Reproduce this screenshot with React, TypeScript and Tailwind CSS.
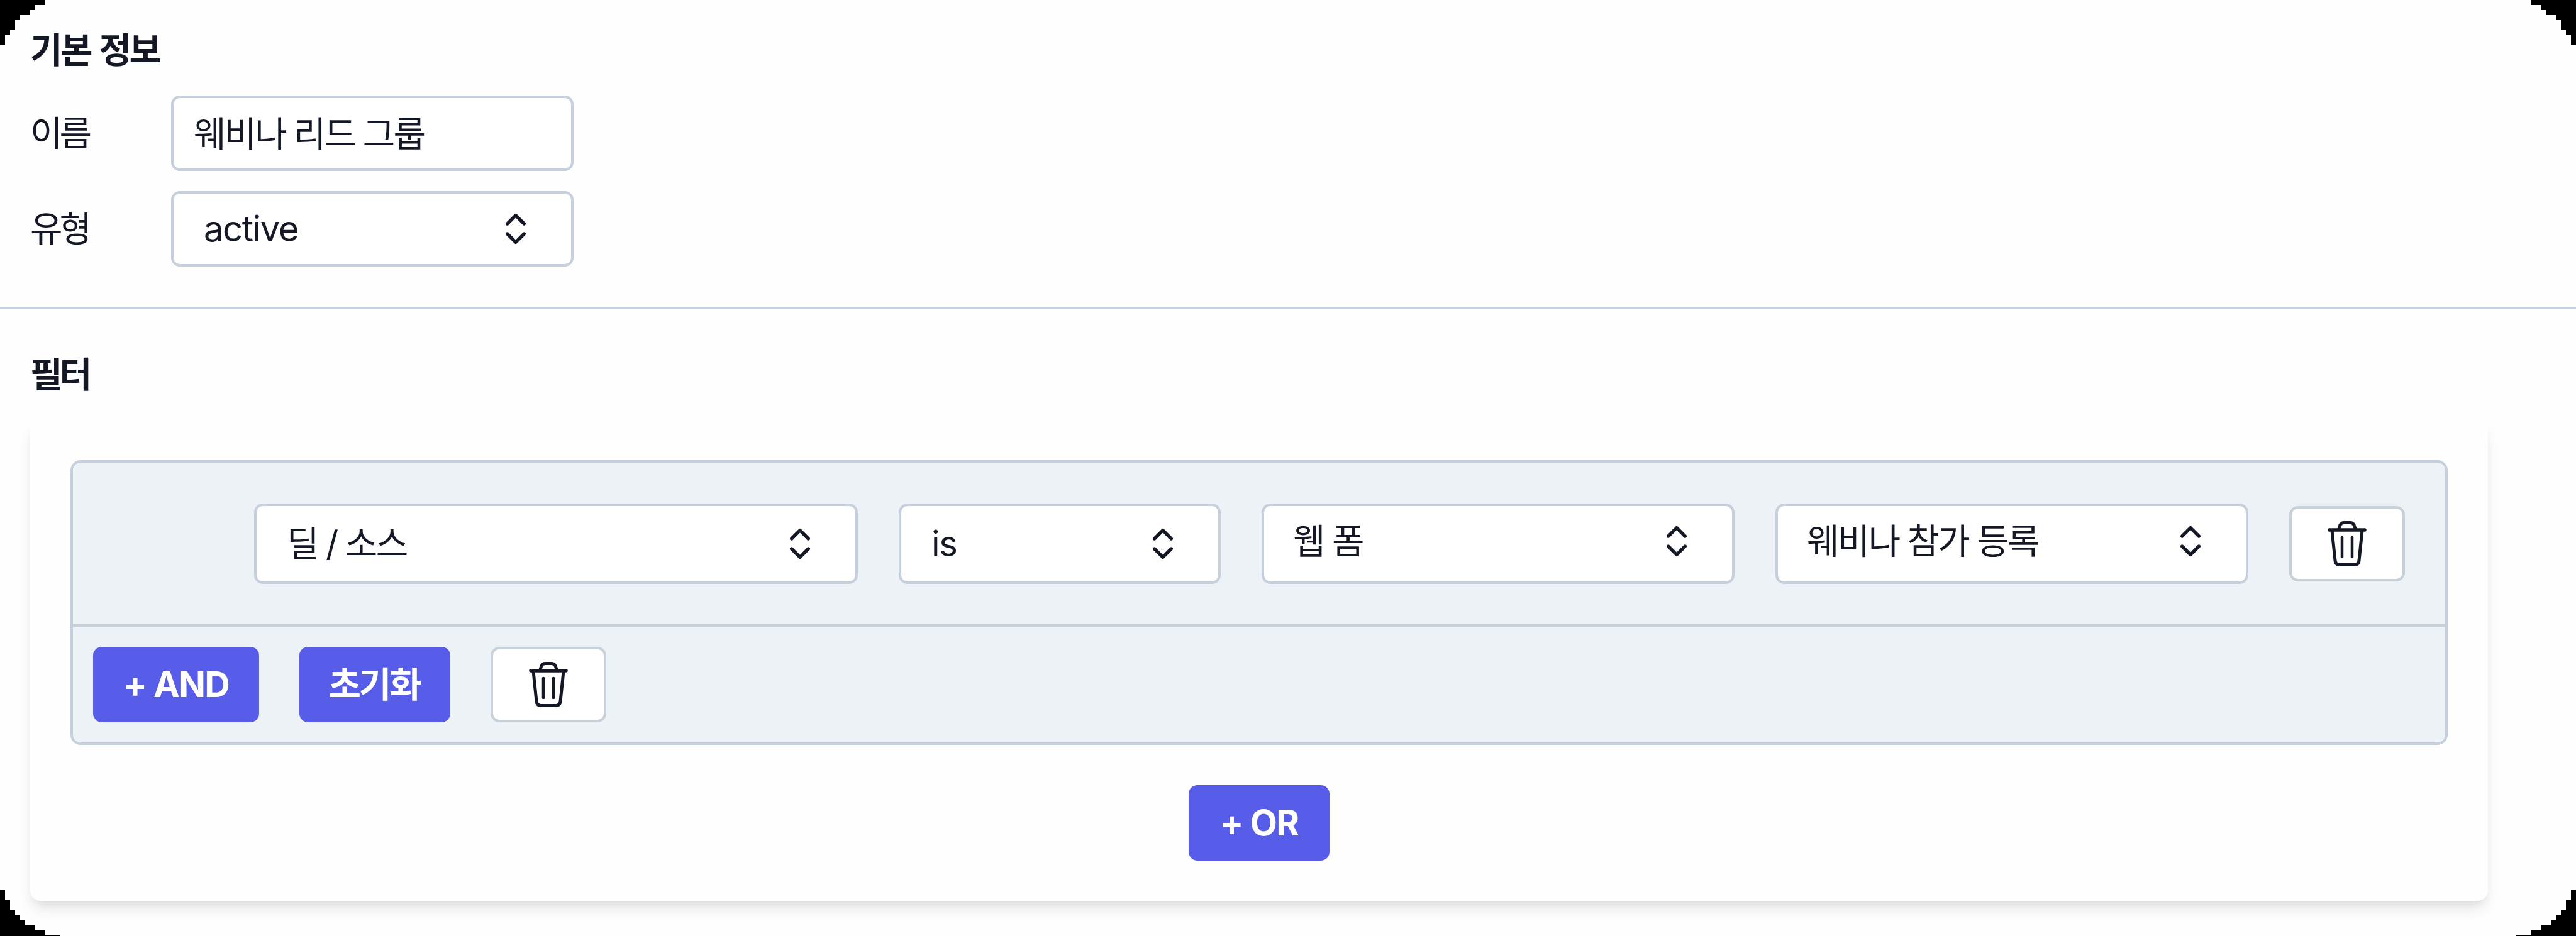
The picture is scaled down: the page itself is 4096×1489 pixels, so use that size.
import type { ReactNode } from "react";
import { ChevronsUpDown } from "lucide-react";

function Corner({ rows, className }: { rows: number[][]; className: string }) {
  return (
    <svg className={className} width="96" height="73" viewBox="0 0 96 73" shapeRendering="crispEdges" fill="#000">
      {rows.map(([y, w, h]) => (
        <rect key={y} x="0" y={y} width={w} height={h} />
      ))}
    </svg>
  );
}

const topRows = [
  [0, 72, 8],
  [8, 56, 8],
  [16, 48, 8],
  [24, 32, 8],
  [32, 24, 16],
  [48, 16, 8],
  [56, 8, 16],
];
const bottomRows = [
  [0, 8, 16],
  [16, 16, 16],
  [32, 24, 8],
  [40, 32, 8],
  [48, 40, 8],
  [56, 56, 8],
  [64, 72, 8],
  [72, 96, 1],
];

function TrashIcon() {
  return (
    <svg className="h-[76px] w-[64px]" viewBox="0 0 64 76" fill="none" stroke="#141824" strokeWidth="5" strokeLinecap="round" strokeLinejoin="round">
      <path d="M4 16H60" strokeWidth="5.5" />
      <path d="M19 14L21 8Q23 4.5 27 4.5H37Q41 4.5 43 8L45 14" />
      <path d="M8 17L13 65Q14 71.5 20 71.5H44Q50 71.5 51 65L56 17" />
      <path d="M24 28V59M40 28V59" strokeWidth="4.5" />
    </svg>
  );
}

function TrashButton() {
  return (
    <button className="flex h-[120px] w-[184px] shrink-0 items-center justify-center rounded-[14px] border-4 border-[#c8d0da] bg-white">
      <TrashIcon />
    </button>
  );
}

function Select({ className, children }: { className: string; children: ReactNode }) {
  return (
    <button className={`flex shrink-0 items-center justify-between rounded-[14px] border-4 border-[#c5d0dc] bg-white pl-12 ${className}`}>
      <span>{children}</span>
      <ChevronsUpDown size={64} strokeWidth={2} />
    </button>
  );
}

function Primary({ className, children }: { className: string; children: ReactNode }) {
  return (
    <button className={`flex h-[120px] items-center justify-center rounded-[14px] bg-[#575de8] font-bold text-white ${className}`}>
      {children}
    </button>
  );
}

export default function App() {
  return (
    <main className="relative h-[1489px] w-[4096px] overflow-hidden bg-[#fefefe] font-['Inter','Noto_Sans_CJK_KR',sans-serif] text-[56px] leading-[80px] text-[#141824]">
      <section className="flex h-[492px] flex-col border-b-4 border-[#c5d0dc] pl-12 pt-10">
        <h2 className="font-bold tracking-[-3.6px] [word-spacing:4px]">기본 정보</h2>
        <div className="mt-8 flex items-center">
          <label className="w-[224px] tracking-[-5px]">이름</label>
          <input
            defaultValue="웨비나 리드 그룹"
            className="h-[120px] w-[640px] rounded-[14px] border-4 border-[#c5d0dc] bg-white px-8 pb-2 tracking-[-2.9px]"
          />
        </div>
        <div className="mt-8 flex items-center">
          <label className="w-[224px] tracking-[-5px]">유형</label>
          <Select className="h-[120px] w-[640px] pr-14">
            <span className="tracking-[-1.4px]">active</span>
          </Select>
        </div>
      </section>
      <section className="pl-12 pt-16">
        <h2 className="font-bold tracking-[-5px]">필터</h2>
        <div className="mt-8 h-[765px] w-[3908px] rounded-[16px] px-16 pt-16 shadow-[0_16px_24px_-4px_rgba(0,0,0,0.1),0_8px_16px_-8px_rgba(0,0,0,0.1)]">
          <div className="h-[453px] w-[3780px] rounded-[16px] border-4 border-[#c5d0dc] bg-[#edf2f7]">
            <div className="flex h-[261px] items-center gap-[65px] border-b-4 border-[#c8d0da] pl-[288px]">
              <Select className="h-[128px] w-[960px] pr-14">
                <span className="tracking-[-2.6px]">딜 / 소스</span>
              </Select>
              <Select className="h-[128px] w-[512px] pr-14">
                <span className="tracking-[-1.4px]">is</span>
              </Select>
              <Select className="h-[128px] w-[752px] pb-2 pr-14">
                <span className="-ml-0.5 tracking-[-2.6px]">웹 폼</span>
              </Select>
              <Select className="h-[128px] w-[752px] pb-2 pr-14">
                <span className="-ml-0.5 tracking-[-2.7px]">웨비나 참가 등록</span>
              </Select>
              <TrashButton />
            </div>
            <div className="flex items-center gap-16 pl-8 pt-8">
              <Primary className="w-[264px] tracking-[-1.6px]">+ AND</Primary>
              <Primary className="w-[240px] pr-0.5 tracking-[-3.2px]">초기화</Primary>
              <TrashButton />
            </div>
          </div>
          <div className="mt-16 flex justify-center">
            <Primary className="w-[224px] tracking-[-1.6px]">+ OR</Primary>
          </div>
        </div>
      </section>
      <Corner rows={topRows} className="absolute left-0 top-0" />
      <Corner rows={topRows} className="absolute right-0 top-0 -scale-x-100" />
      <Corner rows={bottomRows} className="absolute bottom-0 left-0" />
      <Corner rows={bottomRows} className="absolute bottom-0 right-0 -scale-x-100" />
    </main>
  );
}
